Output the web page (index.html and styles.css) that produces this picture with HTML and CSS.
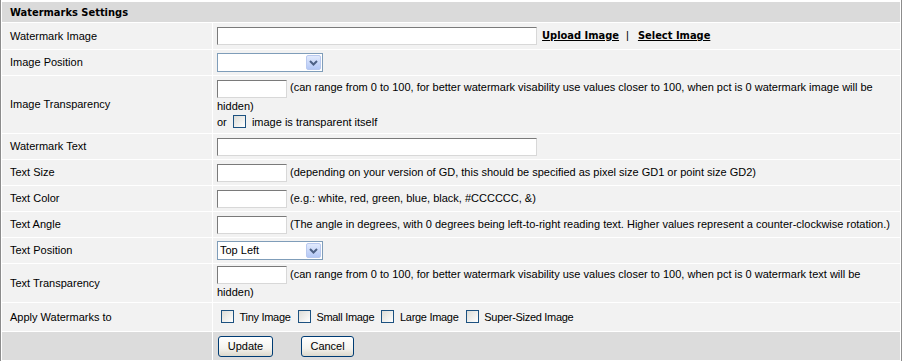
FILE: index.html
```html
<!DOCTYPE html>
<html lang="en">
<head>
    <meta charset="UTF-8">
    <title>Watermarks Settings</title>
    <link rel="stylesheet" href="styles.css">
</head>
<body>
    <div class="wm-box">
        <form class="wm-form">
            <table class="wm-table">
                <tr class="wm-head">
                    <td colspan="2">Watermarks Settings</td>
                </tr>
                <tr class="wm-row wm-first">
                    <td class="wm-label">Watermark Image</td>
                    <td class="wm-field">
                        <input class="wm-input wm-wide" type="text" name="wm_image">
                        <a class="wm-link" href="#">Upload Image</a><span class="wm-sep">|</span><a class="wm-link" href="#">Select Image</a>
                    </td>
                </tr>
                <tr class="wm-row">
                    <td class="wm-label">Image Position</td>
                    <td class="wm-field">
                        <span class="wm-select">
                            <select name="wm_image_pos"><option value=""></option></select>
                            <span class="wm-arrow"><svg width="9" height="6" viewBox="0 0 9 6"><path d="M1 1 L4.5 4.5 L8 1" fill="none" stroke="#4d6185" stroke-width="2"/></svg></span>
                        </span>
                    </td>
                </tr>
                <tr class="wm-row wm-tall">
                    <td class="wm-label">Image Transparency</td>
                    <td class="wm-field wm-multi">
                        <input class="wm-input wm-small" type="text" name="wm_image_pct"> (can range from 0 to 100, for better watermark visability use values closer to 100, when pct is 0 watermark image will be hidden)<br>
                        or <input class="wm-check wm-or" type="checkbox" name="wm_image_alpha"> image is transparent itself
                    </td>
                </tr>
                <tr class="wm-row">
                    <td class="wm-label">Watermark Text</td>
                    <td class="wm-field"><input class="wm-input wm-wide" type="text" name="wm_text"></td>
                </tr>
                <tr class="wm-row">
                    <td class="wm-label">Text Size</td>
                    <td class="wm-field"><input class="wm-input wm-small" type="text" name="wm_text_size"> (depending on your version of GD, this should be specified as pixel size GD1 or point size GD2)</td>
                </tr>
                <tr class="wm-row">
                    <td class="wm-label">Text Color</td>
                    <td class="wm-field"><input class="wm-input wm-small" type="text" name="wm_text_color"> (e.g.: white, red, green, blue, black, #CCCCCC, &amp;)</td>
                </tr>
                <tr class="wm-row">
                    <td class="wm-label">Text Angle</td>
                    <td class="wm-field"><input class="wm-input wm-small" type="text" name="wm_text_angle"> (The angle in degrees, with 0 degrees being left-to-right reading text. Higher values represent a counter-clockwise rotation.)</td>
                </tr>
                <tr class="wm-row">
                    <td class="wm-label">Text Position</td>
                    <td class="wm-field">
                        <span class="wm-select">
                            <select name="wm_text_pos"><option value="tl">Top Left</option></select>
                            <span class="wm-arrow"><svg width="9" height="6" viewBox="0 0 9 6"><path d="M1 1 L4.5 4.5 L8 1" fill="none" stroke="#4d6185" stroke-width="2"/></svg></span>
                        </span>
                    </td>
                </tr>
                <tr class="wm-row wm-mid">
                    <td class="wm-label">Text Transparency</td>
                    <td class="wm-field wm-multi">
                        <input class="wm-input wm-small" type="text" name="wm_text_pct"> (can range from 0 to 100, for better watermark visability use values closer to 100, when pct is 0 watermark text will be hidden)
                    </td>
                </tr>
                <tr class="wm-row wm-apply">
                    <td class="wm-label">Apply Watermarks to</td>
                    <td class="wm-field">
                        <label class="wm-opt"><input class="wm-check" type="checkbox" name="wm_tiny"> Tiny Image</label>
                        <label class="wm-opt"><input class="wm-check" type="checkbox" name="wm_small"> Small Image</label>
                        <label class="wm-opt"><input class="wm-check" type="checkbox" name="wm_large"> Large Image</label>
                        <label class="wm-opt"><input class="wm-check" type="checkbox" name="wm_super"> Super-Sized Image</label>
                    </td>
                </tr>
                <tr class="wm-foot">
                    <td></td>
                    <td class="wm-field">
                        <button class="wm-btn" type="submit">Update</button>
                        <button class="wm-btn wm-cancel" type="button">Cancel</button>
                    </td>
                </tr>
            </table>
        </form>
    </div>
</body>
</html>
```

FILE: styles.css
```css
body {
    margin: 0;
    background: #fff;
    font-family: "Liberation Sans", Arial, sans-serif;
    font-size: 11px;
    color: #000;
}
.wm-box {
    width: 900px;
    border: 1px solid #8c8c8c;
    border-top: none;
    padding-top: 1px;
}
.wm-form {
    margin: 0;
}
.wm-table {
    width: 900px;
    border-collapse: separate;
    border-spacing: 1px;
    background: #fff;
    line-height: 13px;
}
.wm-table td {
    padding: 0;
    background: #f2f2f2;
    vertical-align: middle;
}
.wm-head td {
    height: 20px;
    background: #dadada;
    padding-left: 8px;
    font-family: "DejaVu Sans Condensed", "DejaVu Sans", sans-serif;
    font-weight: bold;
}
.wm-row td {
    height: 25px;
}
.wm-first td {
    height: 26px;
}
.wm-tall td {
    height: 57px;
}
.wm-mid td {
    height: 38px;
}
.wm-apply td {
    height: 28px;
}
.wm-foot td {
    height: 28px;
    background: #dcdcdc;
}
.wm-table .wm-label {
    width: 202px;
    padding-left: 8px;
}
.wm-table .wm-field {
    padding-left: 4px;
    padding-right: 6px;
}
.wm-multi {
    line-height: 16px;
}
.wm-input {
    box-sizing: border-box;
    height: 18px;
    margin: 0;
    padding: 1px 3px;
    border: 1px solid;
    border-color: #7a7a7a #d8d8d8 #d8d8d8 #7a7a7a;
    background: #fff;
    font: inherit;
    vertical-align: middle;
}
.wm-wide {
    width: 320px;
}
.wm-small {
    width: 70px;
}
.wm-link {
    margin-left: 2px;
    color: #000;
    font-family: "DejaVu Sans Condensed", "DejaVu Sans", sans-serif;
    font-weight: bold;
    text-decoration: underline;
}
.wm-sep {
    margin: 0 7px;
}
.wm-select {
    position: relative;
    display: inline-block;
    vertical-align: middle;
}
.wm-select select {
    box-sizing: border-box;
    width: 106px;
    height: 19px;
    margin: 0;
    padding: 0 2px;
    border: 1px solid #7f9db9;
    background: #fff;
    font: inherit;
    -webkit-appearance: none;
    appearance: none;
    display: block;
}
.wm-arrow {
    position: absolute;
    top: 2px;
    right: 2px;
    width: 15px;
    height: 15px;
    box-sizing: border-box;
    border: 1px solid #b9c9ef;
    border-radius: 2px;
    background: linear-gradient(#e1eafd, #b4c8f6);
    display: flex;
    align-items: center;
    justify-content: center;
}
.wm-check {
    -webkit-appearance: none;
    appearance: none;
    box-sizing: border-box;
    width: 13px;
    height: 13px;
    margin: 0 3px 0 4px;
    border: 1px solid #1c5180;
    background: linear-gradient(135deg, #dcdcd7, #fff);
    vertical-align: -2px;
}
.wm-or {
    margin-left: 3px;
}
.wm-opt {
    letter-spacing: -0.3px;
}
.wm-btn {
    box-sizing: border-box;
    height: 21px;
    width: 55px;
    margin: 0 0 0 1px;
    padding: 0;
    border: 1px solid #003c74;
    border-radius: 3px;
    background: linear-gradient(#fff, #f4f3ee 60%, #dcd8cc);
    font: inherit;
    color: #000;
    vertical-align: middle;
}
.wm-cancel {
    width: 53px;
    margin-left: 25px;
}
```
